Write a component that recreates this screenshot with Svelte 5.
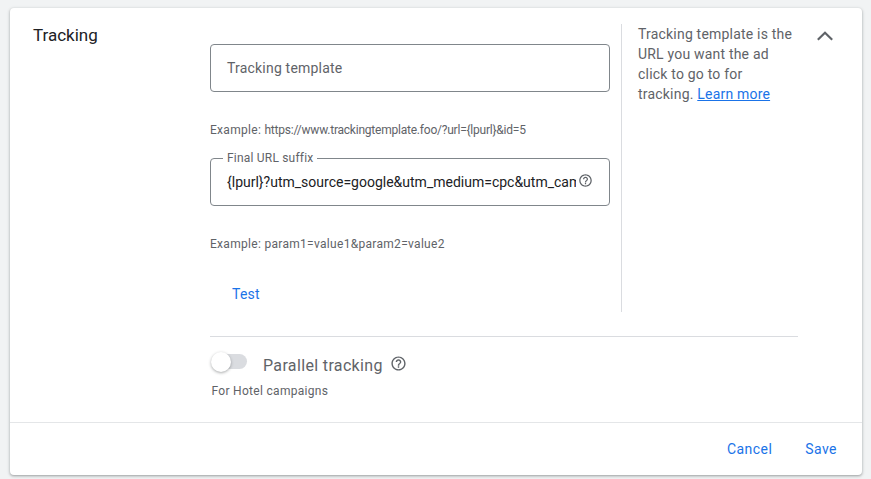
<script>
    const helpIcon = "M11 18h2v-2h-2v2zm1-16C6.48 2 2 6.48 2 12s4.48 10 10 10 10-4.48 10-10S17.52 2 12 2zm0 18c-4.41 0-8-3.59-8-8s3.59-8 8-8 8 3.59 8 8-3.59 8-8 8zm0-14c-2.21 0-4 1.79-4 4h2c0-1.1.9-2 2-2s2 .9 2 2c0 2-3 1.75-3 5h2c0-2.25 3-2.5 3-5 0-2.21-1.79-4-4-4z";
</script>

<div class="page">
    <section class="card">
        <div class="body">
            <h2 class="title">Tracking</h2>
            <div class="content">
                <div class="top">
                    <div class="fields">
                        <div class="input">
                            <span class="placeholder">Tracking template</span>
                        </div>
                        <p class="hint first">Example: <span class="url">https://www.trackingtemplate.foo/?url={"{"}lpurl{"}"}&amp;id=5</span></p>
                        <div class="input filled">
                            <span class="float-label">Final URL suffix</span>
                            <span class="value">{"{"}lpurl{"}"}?utm_source=google&amp;utm_medium=cpc&amp;utm_campaign={"{"}campaignid{"}"}</span>
                            <svg class="help small" viewBox="0 0 24 24"><path d={helpIcon} /></svg>
                        </div>
                        <p class="hint second">Example: param1=value1&amp;param2=value2</p>
                        <button class="link test">Test</button>
                    </div>
                    <aside class="side">
                        <p>Tracking template is the URL you want the ad click to go to for tracking. <a href="#learn">Learn more</a></p>
                    </aside>
                </div>
                <div class="parallel">
                    <div class="row">
                        <span class="toggle"><span class="track"></span><span class="thumb"></span></span>
                        <span class="label">Parallel tracking</span>
                        <svg class="help" viewBox="0 0 24 24"><path d={helpIcon} /></svg>
                    </div>
                    <p class="note">For Hotel campaigns</p>
                </div>
            </div>
            <svg class="chevron" viewBox="0 0 24 24"><path d="M6.6 14.9 12 9.5l5.4 5.4" /></svg>
        </div>
        <footer class="footer">
            <button class="link">Cancel</button>
            <button class="link">Save</button>
        </footer>
    </section>
</div>

<style>
    :global(body) {
        background: #f1f3f4;
    }

    .page {
        width: 871px;
        height: 479px;
        box-sizing: border-box;
        padding: 8px 9px 4px 10px;
        font-family: Roboto, "Liberation Sans", sans-serif;
        overflow: hidden;
    }

    .card {
        height: 100%;
        background: #fff;
        border-radius: 4px;
        box-shadow:
            0 1px 2px rgba(60, 64, 67, 0.3),
            0 1px 3px 1px rgba(60, 64, 67, 0.15);
        display: flex;
        flex-direction: column;
    }

    .body {
        flex: 1;
        display: flex;
        min-height: 0;
        padding: 16px 24px 0 23px;
    }

    .title {
        width: 177px;
        flex: none;
        margin: 0;
        font-size: 17px;
        font-weight: 400;
        line-height: 22px;
        color: #202124;
    }

    .content {
        width: 588px;
        flex: none;
    }

    .top {
        display: flex;
    }

    .fields {
        width: 400px;
        padding-top: 20px;
        margin-right: 11px;
    }

    .input {
        position: relative;
        box-sizing: border-box;
        height: 48px;
        border: 1px solid #80868b;
        border-radius: 4px;
        display: flex;
        align-items: center;
        padding: 0 16px;
        font-size: 14px;
    }

    .placeholder {
        color: #5f6368;
        letter-spacing: 0.2px;
    }

    .filled {
        padding-right: 33px;
    }

    .value {
        color: #202124;
        white-space: nowrap;
        overflow: hidden;
    }

    .float-label {
        position: absolute;
        top: -8px;
        left: 12px;
        padding: 0 4px;
        background: #fff;
        font-size: 12px;
        line-height: 14px;
        color: #5f6368;
        letter-spacing: 0.2px;
    }

    .help {
        width: 17px;
        height: 17px;
        fill: #5f6368;
        flex: none;
        margin-top: -4px;
    }

    .help.small {
        position: absolute;
        right: 16px;
        top: 14px;
        width: 15px;
        height: 15px;
        margin-top: 0;
    }

    .hint {
        margin: 0;
        font-size: 12px;
        line-height: 14px;
        color: #5f6368;
        letter-spacing: 0.3px;
    }

    .url {
        letter-spacing: -0.22px;
    }

    .hint.first {
        padding: 31px 0 21px;
    }

    .hint.second {
        padding: 31px 0 0;
    }

    .link {
        border: 0;
        background: none;
        padding: 0;
        font: inherit;
        font-size: 14px;
        line-height: 20px;
        color: #1a73e8;
        letter-spacing: 0.45px;
    }

    .test {
        display: block;
        margin: 33px 0 8px 22px;
        letter-spacing: 0.2px;
    }

    .side {
        flex: 1;
        border-left: 1px solid #dadce0;
        padding: 0 0 0 16px;
    }

    .side p {
        margin: 0;
        width: 160px;
        font-size: 14px;
        line-height: 20px;
        color: #5f6368;
        letter-spacing: 0.2px;
    }

    .side a {
        color: #1a73e8;
    }

    .parallel {
        margin-top: 24px;
        border-top: 1px solid #dadce0;
    }

    .row {
        display: flex;
        align-items: center;
        height: 24px;
        margin-top: 16px;
    }

    .toggle {
        position: relative;
        width: 36px;
        height: 20px;
        margin-left: 1px;
        margin-right: 16px;
    }

    .track {
        position: absolute;
        left: 3px;
        top: -1px;
        width: 33px;
        height: 15px;
        border-radius: 8px;
        background: #dadce0;
    }

    .thumb {
        position: absolute;
        left: 0;
        top: -3px;
        width: 20px;
        height: 20px;
        border-radius: 50%;
        background: #fff;
        box-shadow: 0 1px 3px rgba(60, 64, 67, 0.45);
    }

    .label {
        font-size: 16px;
        color: #5f6368;
        letter-spacing: 0.35px;
        margin-right: 7px;
    }

    .note {
        margin: 6px 0 0 1.5px;
        font-size: 12px;
        line-height: 16px;
        color: #5f6368;
        letter-spacing: 0.3px;
    }

    .chevron {
        width: 32px;
        height: 32px;
        fill: none;
        stroke: #5f6368;
        stroke-width: 1.6;
        flex: none;
        margin: -4px -4px 0 11px;
    }

    .footer {
        flex: none;
        height: 52px;
        border-top: 1px solid #e4e6e8;
        display: flex;
        justify-content: flex-end;
        align-items: center;
        gap: 33px;
        padding-right: 25px;
    }
</style>
